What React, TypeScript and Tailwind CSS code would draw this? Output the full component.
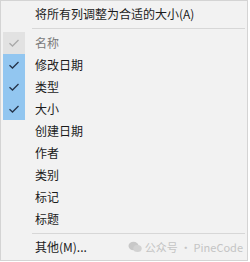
const rows = [
  { label: "名称", state: "disabled" },
  { label: "修改日期", state: "checked" },
  { label: "类型", state: "checked" },
  { label: "大小", state: "checked" },
  { label: "创建日期", state: "" },
  { label: "作者", state: "" },
  { label: "类别", state: "" },
  { label: "标记", state: "" },
  { label: "标题", state: "" },
];

function Check({ color }: { color: string }) {
  return (
    <svg width="12" height="10" viewBox="0 0 12 10" fill="none">
      <path d="M1.5 5.2 L4.5 8 L10.5 2" stroke={color} strokeWidth="1.3" />
    </svg>
  );
}

export default function App() {
  return (
    <div
      className="w-[250px] h-[262px] bg-white text-[12px] text-[#1b1b1b]"
      style={{ fontFamily: '"Noto Sans CJK SC", "Noto Sans", sans-serif' }}>
      <div className="w-[248px] h-[261px] bg-[#f2f2f2] border border-[#d4d4d4] pt-[2px]">
        <div className="h-[22px] flex items-center pl-[34px]">
          将所有列调整为合适的大小(A)
        </div>
        <div className="h-[7px] flex items-center pl-[31px] pr-[2px]">
          <div className="h-px w-full bg-[#d7d7d7]" />
        </div>
        {rows.map((r) => (
          <div key={r.label} className="h-[22px] flex items-center">
            <div
              className={
                "w-[22px] h-[22px] ml-[2px] flex items-center justify-center " +
                (r.state === "checked"
                  ? "bg-[#92c6f0]"
                  : r.state === "disabled"
                  ? "bg-[#e2e2e2]"
                  : "")
              }>
              {r.state === "checked" && <Check color="#24334a" />}
              {r.state === "disabled" && <Check color="#a9a9a9" />}
            </div>
            <span
              className={
                "ml-[10px] " +
                (r.state === "disabled" ? "text-[#7a7a7a]" : "")
              }>
              {r.label}
            </span>
          </div>
        ))}
        <div className="h-[6px] flex items-center pl-[31px] pr-[2px]">
          <div className="h-px w-full bg-[#d7d7d7]" />
        </div>
        <div className="h-[22px] flex items-center pl-[34px] pr-[4px]">
          <span>其他(M)...</span>
          <span className="ml-auto flex items-center gap-[3px] text-[11px] text-[#c4c4c4]">
            <svg width="14" height="12" viewBox="0 0 14 12">
              <ellipse cx="5.5" cy="5" rx="5" ry="4.2" fill="#c8c8c8" />
              <ellipse cx="9.5" cy="7.5" rx="4.2" ry="3.6" fill="#d2d2d2" />
            </svg>
            公众号 · PineCode
          </span>
        </div>
      </div>
    </div>
  );
}
